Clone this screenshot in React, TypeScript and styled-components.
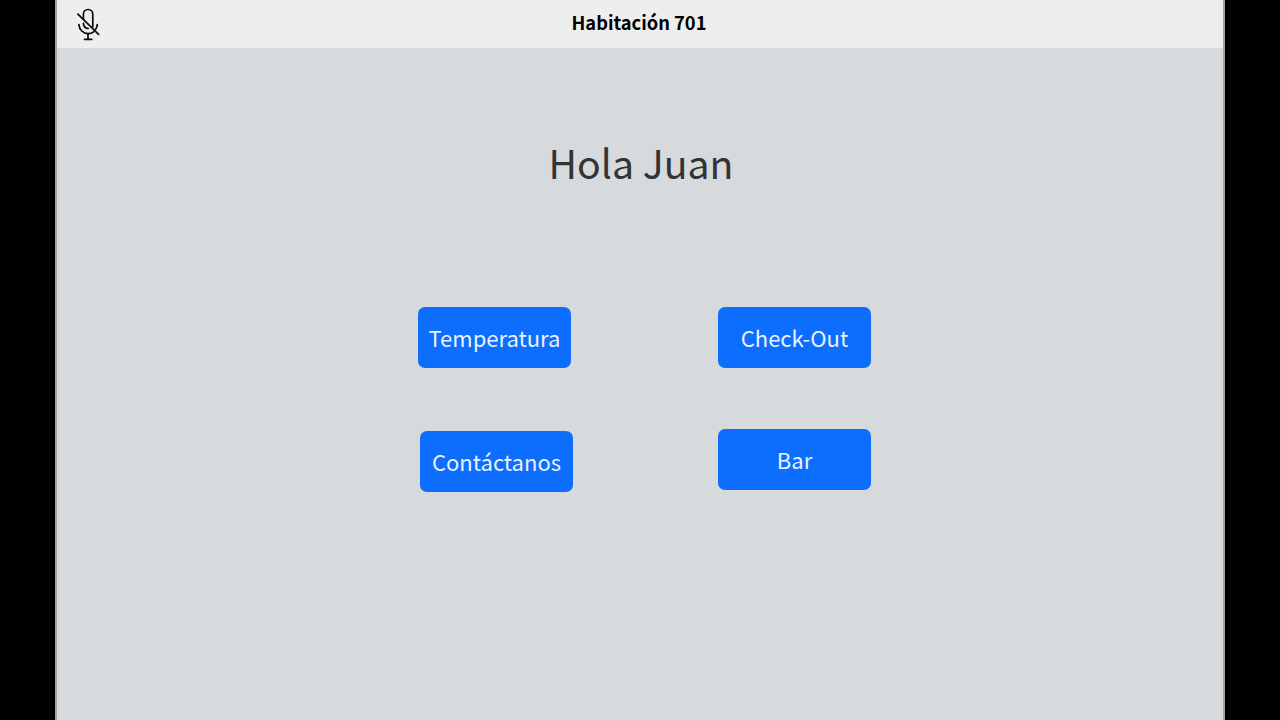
import React from 'react';
import styled, { createGlobalStyle } from 'styled-components';

const Global = createGlobalStyle`
  * { box-sizing: border-box; }
  body { margin: 0; background: #000; overflow: hidden; }
`;
const Page = styled.div`
  height: 720px;
  display: flex;
  justify-content: center;
  background: #000;
  font-family: "Noto Sans CJK SC", "Noto Sans", sans-serif;
`;
const Screen = styled.main`
  width: 1170px;
  background: #d6dadd;
  border: solid #a0a2a4;
  border-width: 0 2px;
`;
const TopBar = styled.header`
  height: 48px;
  padding: 0 20px;
  display: grid;
  grid-template-columns: 24px 1fr 24px;
  background: #eee;
`;
const RoomTitle = styled.h1`
  margin: 0 2px 0 0;
  text-align: center;
  font-size: 18.3px;
  line-height: 44px;
  font-weight: 700;
  color: #000;
`;
const MicIcon = styled.svg`
  margin-top: 8px;
  width: 24px;
  height: 34px;
`;
const Greeting = styled.h2`
  margin: 82px 0 0 2px;
  text-align: center;
  font-size: 39.2px;
  line-height: 64px;
  font-weight: 400;
  color: #333;
`;
const Menu = styled.nav`
  display: flex;
  gap: 147px;
  margin: 113px 0 0 361px;
`;
const Column = styled.div<{ $gap: number }>`
  display: flex;
  flex-direction: column;
  width: 153px;
  gap: ${(p) => p.$gap}px;
`;
const MenuButton = styled.button<{ $shift?: number }>`
  width: 153px;
  height: 61px;
  margin: 0 0 0 ${(p) => p.$shift ?? 0}px;
  padding: 0 0 2px;
  border: 0;
  border-radius: 7px;
  background: #0d6efd;
  color: #e9f2ff;
  font: 400 22px/36px "Noto Sans CJK SC", "Noto Sans", sans-serif;
`;

export default function App() {
  return (
    <Page>
      <Global />
      <Screen>
        <TopBar>
          <MicIcon viewBox="0 0 24 34" fill="none" stroke="#0a0a0a" strokeWidth="1.7" strokeLinecap="round">
            <path d="M6.4 11V6.2a4.7 4.7 0 0 1 9.4 0v12.5" />
            <path d="M6.4 15.4c.2 3 2.2 4.9 4.9 5.1" />
            <path d="M1.9 16.6c.5 5 4.2 9.1 9.1 9.1 2.4 0 4.4-.8 6-2.1M20.3 16.6a9 9 0 0 1-1.7 4.6" />
            <path d="M11 25.7v5.5M7.5 31.4h7.3M.9 6.2l20.7 20.2" />
          </MicIcon>
          <RoomTitle>Habitación 701</RoomTitle>
        </TopBar>
        <Greeting>Hola Juan</Greeting>
        <Menu>
          <Column $gap={63}>
            <MenuButton>Temperatura</MenuButton>
            <MenuButton $shift={2}>Contáctanos</MenuButton>
          </Column>
          <Column $gap={61}>
            <MenuButton>Check-Out</MenuButton>
            <MenuButton>Bar</MenuButton>
          </Column>
        </Menu>
      </Screen>
    </Page>
  );
}
